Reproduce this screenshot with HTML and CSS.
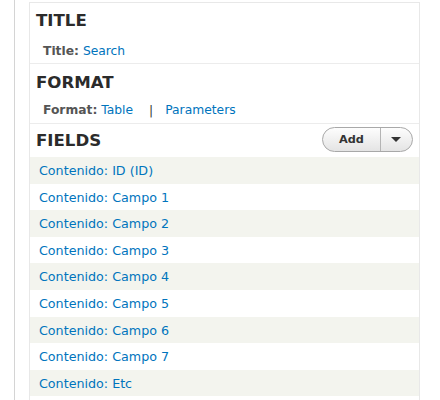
FILE: index.html
```html
<!DOCTYPE html>
<html>
<head>
<meta charset="utf-8">
<link rel="stylesheet" href="styles.css">
</head>
<body>
<div class="shell">
  <div class="panel">
    <div class="section s-title">
      <h2 class="heading">TITLE</h2>
      <div class="details d-title"><span class="label">Title:</span> <a class="link" href="#">Search</a></div>
    </div>
    <div class="section s-format">
      <h2 class="heading">FORMAT</h2>
      <div class="details d-format"><span class="label">Format:</span> <a class="link" href="#">Table</a><span class="sep">|</span><a class="link" href="#">Parameters</a></div>
    </div>
    <div class="section s-fields">
      <div class="fields-head">
        <h2 class="heading">FIELDS</h2>
        <div class="dropbutton">
          <span class="drop-main">Add</span>
          <span class="drop-toggle"><span class="caret"></span></span>
        </div>
      </div>
      <ul class="rows">
        <li class="row"><a class="link" href="#">Contenido: ID (ID)</a></li>
        <li class="row"><a class="link" href="#">Contenido: Campo 1</a></li>
        <li class="row"><a class="link" href="#">Contenido: Campo 2</a></li>
        <li class="row"><a class="link" href="#">Contenido: Campo 3</a></li>
        <li class="row"><a class="link" href="#">Contenido: Campo 4</a></li>
        <li class="row"><a class="link" href="#">Contenido: Campo 5</a></li>
        <li class="row"><a class="link" href="#">Contenido: Campo 6</a></li>
        <li class="row"><a class="link" href="#">Contenido: Campo 7</a></li>
        <li class="row"><a class="link" href="#">Contenido: Etc</a></li>
      </ul>
    </div>
  </div>
</div>
</body>
</html>
```
FILE: styles.css
```css
html, body {
  margin: 0;
  padding: 0;
  background: #ffffff;
}
body {
  font-family: "DejaVu Sans", Verdana, sans-serif;
  color: #333333;
}
.shell {
  margin-left: 14px;
  border-left: 1px solid #d4d4d4;
  padding: 2px 0 0 14px;
  min-height: 398px;
  width: 391px;
}
.panel {
  border: 1px solid #e8e8e8;
  border-bottom: none;
  min-height: 397px;
}
.section {
  border-bottom: 1px solid #ececec;
}
.heading {
  margin: 0;
  font-size: 16.6px;
  line-height: 20px;
  font-weight: bold;
  color: #2b2b2b;
  padding-left: 6px;
}
.s-title .heading { padding-top: 8px; }
.s-format .heading { padding-top: 9px; }
.details {
  font-size: 12.3px;
  line-height: 16px;
  padding-left: 13px;
}
.d-title { margin-top: 12px; padding-bottom: 4px; }
.d-format { margin-top: 9px; padding-bottom: 5px; }
.label {
  font-weight: bold;
  color: #555555;
}
.link {
  color: #0074bd;
  text-decoration: none;
}
.sep {
  color: #333333;
  margin: 0 12px 0 16px;
}
.s-fields {
  border-bottom: none;
}
.fields-head {
  display: flex;
  align-items: center;
  justify-content: space-between;
  height: 33px;
  padding-right: 6px;
}
.dropbutton {
  display: flex;
  height: 23px;
  border: 1px solid #a8a8a8;
  border-radius: 13px;
  background: linear-gradient(#fdfdfd, #e4e4e4);
  box-sizing: content-box;
  margin-top: -3px;
}
.drop-main {
  width: 57px;
  text-align: center;
  font-size: 11.3px;
  font-weight: bold;
  line-height: 23px;
  color: #333333;
  border-right: 1px solid #b4b4b4;
}
.drop-toggle {
  width: 31px;
  display: flex;
  align-items: center;
  justify-content: center;
}
.caret {
  width: 0;
  height: 0;
  border-top: 5px solid #333333;
  border-left: 5.5px solid transparent;
  border-right: 5.5px solid transparent;
  margin-right: 2px;
}
.rows {
  list-style: none;
  margin: 0;
  padding: 0;
}
.row {
  font-size: 12.7px;
  line-height: 24.6px;
  padding: 2px 0 0 9px;
}
.row:nth-child(odd) {
  background: #f3f4ee;
}
```
